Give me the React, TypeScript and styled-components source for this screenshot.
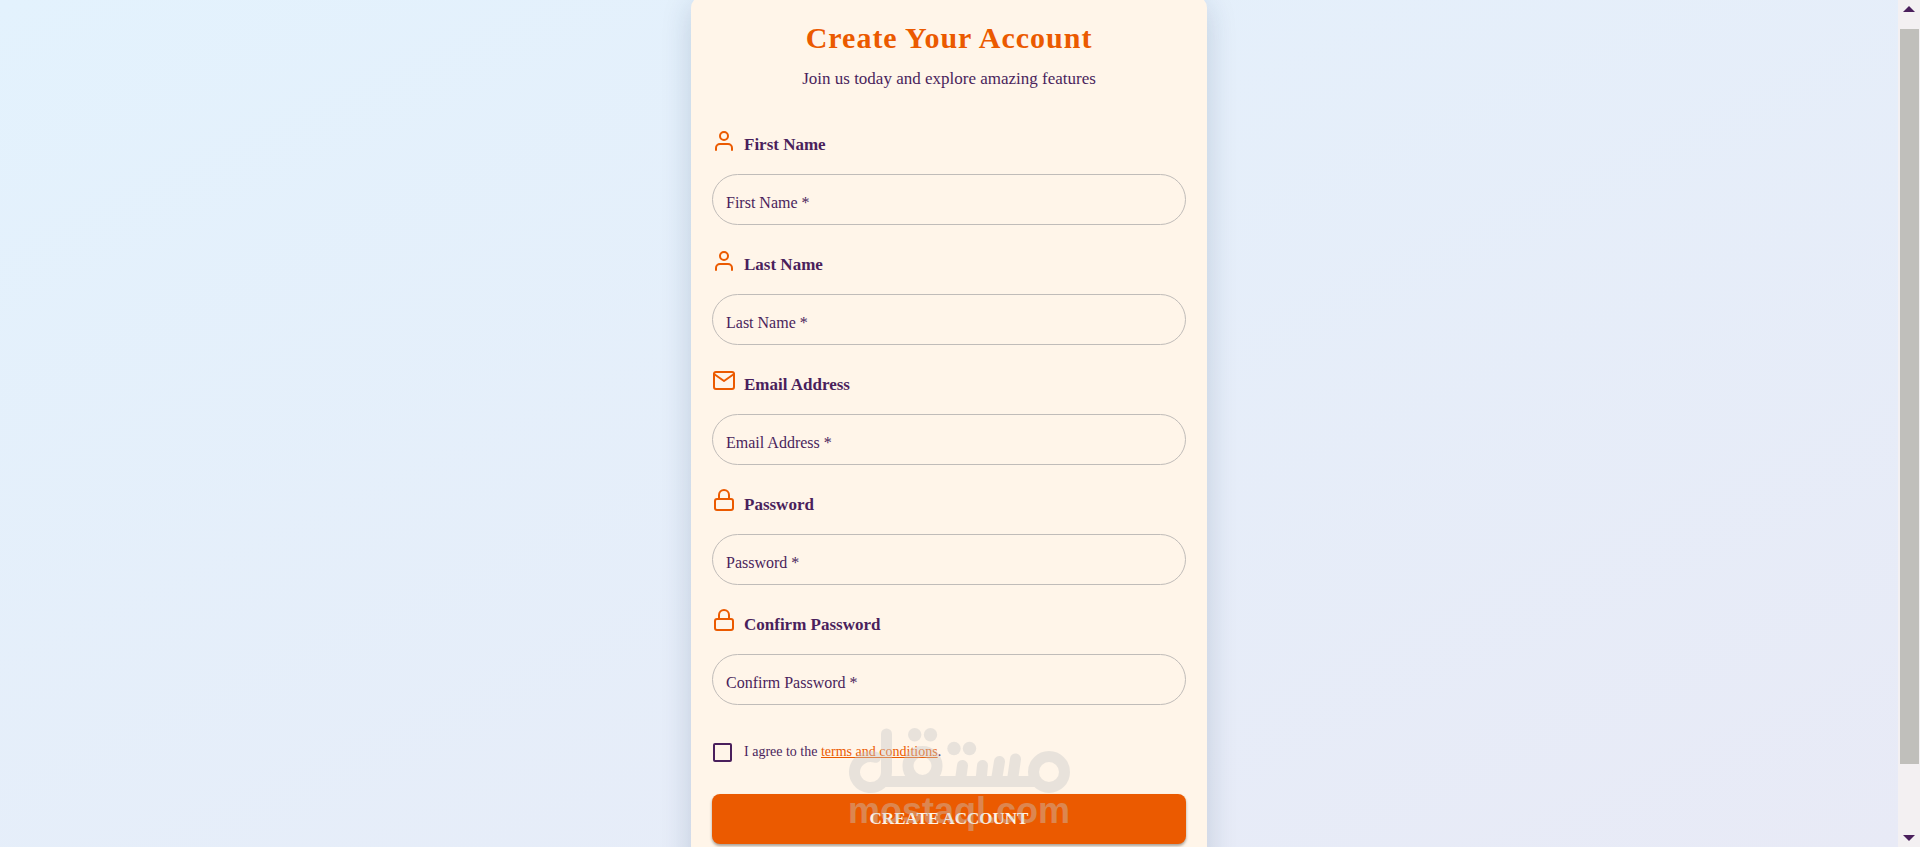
import React from "react";
import styled, { createGlobalStyle } from "styled-components";

const GlobalStyle = createGlobalStyle`
  *, *::before, *::after { box-sizing: border-box; }
  html, body { margin: 0; height: 100%; overflow: hidden; }
  body { font-family: "Times New Roman", "Liberation Serif", serif; color: #4a1f5c; }
`;

const Viewport = styled.div`
  display: flex;
  height: 100vh;
  overflow: hidden;
`;

const Page = styled.main`
  flex: 1;
  display: flex;
  justify-content: center;
  align-items: flex-start;
  overflow: hidden;
  background: linear-gradient(155deg, #e3f2fd 0%, #e8eaf6 100%);
`;

const Card = styled.form`
  width: 100%;
  max-width: 516px;
  margin-top: -4px;
  padding: 24px 21px 48px;
  border-radius: 12px;
  background: #fff5e9;
  box-shadow: 0 8px 30px rgba(20, 50, 90, 0.18);
`;

const Header = styled.header`
  display: flex;
  flex-direction: column;
  align-items: center;
  margin-bottom: 34px;
`;

const Title = styled.h1`
  margin: 0 0 8px;
  font-size: 30px;
  line-height: 36px;
  letter-spacing: 1px;
  color: #eb5a00;
`;

const Subtitle = styled.p`
  margin: 0;
  font-size: 17px;
  line-height: 30px;
`;

const Field = styled.div`
  display: flex;
  flex-direction: column;
  gap: 12px;
  margin-bottom: 23px;
`;

const FieldLabel = styled.label`
  display: flex;
  align-items: center;
  gap: 8px;
  height: 34px;
  font-size: 17px;
  font-weight: 700;
`;

const FieldIcon = styled.svg`
  flex: none;
  width: 24px;
  height: 24px;
  margin-bottom: 8px;
  fill: none;
  stroke: #eb5a00;
  stroke-width: 2;
  stroke-linecap: round;
  stroke-linejoin: round;
`;

const TextInput = styled.input`
  width: 100%;
  height: 51px;
  padding: 6px 13px 0;
  border: 1px solid #c0bcb9;
  border-radius: 26px;
  background: transparent;
  font: inherit;
  font-size: 16px;
  color: inherit;
  &::placeholder { color: #4a1f5c; opacity: 1; }
`;

const Terms = styled.div`
  display: flex;
  align-items: center;
  gap: 12px;
  margin: 35px 0 30px;
  font-size: 14px;
  line-height: 24px;
`;

const Checkbox = styled.input`
  appearance: none;
  width: 19px;
  height: 19px;
  margin: 0 0 0 1px;
  border: 2px solid #4a1f5c;
  border-radius: 2px;
`;

const TermsLink = styled.a`
  color: #eb5a00;
`;

const SubmitArea = styled.div`
  position: relative;
`;

const SubmitButton = styled.button`
  width: 100%;
  height: 50px;
  border: 0;
  border-radius: 8px;
  background: #eb5a00;
  box-shadow: 0 2px 3px rgba(0, 0, 0, 0.35);
  font: inherit;
  font-size: 17px;
  font-weight: 700;
  text-transform: uppercase;
  color: #fff4e8;
`;

const Watermark = styled.svg`
  position: absolute;
  left: 134px;
  top: -68px;
  width: 228px;
  height: 106px;
  opacity: 0.4;
  pointer-events: none;
  fill: #c8c8c8;
  font-family: "Liberation Sans", Arial, sans-serif;
  font-size: 36px;
  font-weight: 700;
`;

const Scrollbar = styled.div`
  display: flex;
  flex-direction: column;
  align-items: center;
  width: 22px;
  padding: 6px 0;
  background: #f3f0f2;
`;

const Arrow = styled.svg`
  flex: none;
  width: 12px;
  height: 6px;
  fill: #4a1f5c;
`;

const Track = styled.div`
  flex: 1;
  align-self: stretch;
  padding: 17px 1px 0 2px;
`;

const Thumb = styled.div`
  height: calc(100% - 71px);
  background: #c0bfbb;
`;

const icons = {
  user: (
    <>
      <circle cx="12" cy="7" r="4" />
      <path d="M4 21v-2a4 4 0 0 1 4-4h8a4 4 0 0 1 4 4v2" />
    </>
  ),
  mail: (
    <>
      <rect x="2" y="3" width="20" height="17" rx="2" />
      <path d="M2 5l10 7 10-7" />
    </>
  ),
  lock: (
    <>
      <rect x="3" y="10" width="18" height="11" rx="2" />
      <path d="M7 10V6a5 5 0 0 1 10 0v4" />
    </>
  ),
};

const fields: { id: string; label: string; type: string; icon: keyof typeof icons }[] = [
  { id: "firstName", label: "First Name", type: "text", icon: "user" },
  { id: "lastName", label: "Last Name", type: "text", icon: "user" },
  { id: "email", label: "Email Address", type: "email", icon: "mail" },
  { id: "password", label: "Password", type: "password", icon: "lock" },
  { id: "confirm", label: "Confirm Password", type: "password", icon: "lock" },
];

export default function App() {
  return (
    <Viewport>
      <GlobalStyle />
      <Page>
        <Card onSubmit={(e) => e.preventDefault()}>
          <Header>
            <Title>Create Your Account</Title>
            <Subtitle>Join us today and explore amazing features</Subtitle>
          </Header>
          {fields.map((f) => (
            <Field key={f.id}>
              <FieldLabel htmlFor={f.id}>
                <FieldIcon viewBox="0 0 24 24" aria-hidden="true">{icons[f.icon]}</FieldIcon>
                {f.label}
              </FieldLabel>
              <TextInput id={f.id} type={f.type} placeholder={`${f.label} *`} />
            </Field>
          ))}
          <Terms>
            <Checkbox id="terms" type="checkbox" />
            <label htmlFor="terms">
              I agree to the <TermsLink href="#terms">terms and conditions</TermsLink>.
            </label>
          </Terms>
          <SubmitArea>
            <SubmitButton type="submit">Create Account</SubmitButton>
            <Watermark viewBox="0 0 228 106" role="img" aria-label="مستقل mostaql.com">
              <g fill="none" stroke="#c8c8c8" strokeWidth="11" strokeLinecap="round">
                <path d="M40.5 8V46a16 15.5 0 1 1-11-14.700" />
                <path d="M36 55.5H193" strokeLinecap="butt" />
                <circle cx="76.5" cy="40" r="14.5" />
                <circle cx="203" cy="46" r="15.5" />
                <path d="M116.5 39.5L114.500 54M136.5 39.5L135 54M153.5 35.5L150.5 54M169.5 33L166.5 54" />
              </g>
              <circle cx="68.7" cy="8.7" r="6.7" />
              <circle cx="84.5" cy="8.7" r="6.7" />
              <circle cx="108" cy="22.5" r="6.7" />
              <circle cx="123.5" cy="22.5" r="6.7" />
              <text x="2" y="97">mostaql.com</text>
            </Watermark>
          </SubmitArea>
        </Card>
      </Page>
      <Scrollbar aria-hidden="true">
        <Arrow viewBox="0 0 12 6"><path d="M6 0L12 6H0z" /></Arrow>
        <Track><Thumb /></Track>
        <Arrow viewBox="0 0 12 6"><path d="M0 0H12L6 6z" /></Arrow>
      </Scrollbar>
    </Viewport>
  );
}
